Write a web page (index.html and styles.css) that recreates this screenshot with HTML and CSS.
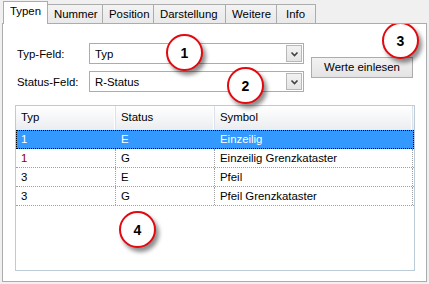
FILE: index.html
```html
<!DOCTYPE html>
<html>
<head>
<meta charset="utf-8">
<link rel="stylesheet" href="styles.css">
</head>
<body>
<div class="window">
  <div class="tabs">
    <div class="tab active">Typen</div>
    <div class="tab">Nummer</div>
    <div class="tab">Position</div>
    <div class="tab">Darstellung</div>
    <div class="tab">Weitere</div>
    <div class="tab">Info</div>
  </div>
  <div class="panel">
    <div class="form">
      <label class="lbl">Typ-Feld:</label>
      <div class="combo"><span class="val">Typ</span><span class="drop"><svg width="9" height="6" viewBox="0 0 9 6"><path d="M1.5 1.5 L4.5 4.5 L7.5 1.5" fill="none" stroke="#404040" stroke-width="1.6"/></svg></span></div>
      <button class="btn">Werte einlesen</button>
      <label class="lbl">Status-Feld:</label>
      <div class="combo"><span class="val">R-Status</span><span class="drop"><svg width="9" height="6" viewBox="0 0 9 6"><path d="M1.5 1.5 L4.5 4.5 L7.5 1.5" fill="none" stroke="#404040" stroke-width="1.6"/></svg></span></div>
    </div>
    <div class="list">
      <div class="row head">
        <div class="c c1">Typ</div>
        <div class="c c2">Status</div>
        <div class="c c3">Symbol</div>
      </div>
      <div class="row sel">
        <div class="c c1">1</div>
        <div class="c c2">E</div>
        <div class="c c3">Einzeilig</div>
      </div>
      <div class="row">
        <div class="c c1 red">1</div>
        <div class="c c2">G</div>
        <div class="c c3">Einzeilig Grenzkataster</div>
      </div>
      <div class="row">
        <div class="c c1">3</div>
        <div class="c c2">E</div>
        <div class="c c3">Pfeil</div>
      </div>
      <div class="row">
        <div class="c c1">3</div>
        <div class="c c2">G</div>
        <div class="c c3">Pfeil Grenzkataster</div>
      </div>
    </div>
    <div class="badge b1">1</div>
    <div class="badge b2">2</div>
    <div class="badge b3">3</div>
    <div class="badge b4">4</div>
  </div>
</div>
</body>
</html>
```

FILE: styles.css
```css
html, body {
  margin: 0;
  padding: 0;
  background: #f0f0f0;
}
body {
  font-family: "Liberation Sans", Arial, sans-serif;
  font-size: 11.4px;
  color: #000;
}
.window {
  width: 429px;
  height: 284px;
  box-sizing: border-box;
  padding: 1px 2px 0 2px;
}
.tabs {
  display: flex;
  align-items: flex-end;
  height: 22px;
  padding-left: 1px;
}
.tab {
  height: 19px;
  box-sizing: border-box;
  border: 1px solid #acacac;
  border-bottom: none;
  border-left: none;
  background: linear-gradient(#f3f3f3, #e9e9e9);
  line-height: 18px;
  padding: 0 6px;
  color: #000;
}
.tab:nth-child(2) { border-left: 1px solid #acacac; width: 55px; }
.tab:nth-child(3) { width: 51px; }
.tab:nth-child(4) { width: 72px; }
.tab:nth-child(5) { width: 51px; }
.tab:nth-child(6) { width: 39px; padding-left: 9px; }
.tab.active {
  height: 23px;
  width: 45px;
  background: #fff;
  border-left: 1px solid #acacac;
  border-right: 1px solid #acacac;
  margin-bottom: -1px;
  z-index: 1;
  position: relative;
  line-height: 19px;
  padding-left: 6px;
}
.tab.active + .tab { border-left: none; }
.panel {
  position: relative;
  overflow: hidden;
  height: 259px;
  box-sizing: border-box;
  border: 1px solid #acacac;
  background: #fff;
  padding: 19px 12px 0 12px;
}
.form {
  display: grid;
  grid-template-columns: 67px 215px 102px;
  grid-template-rows: 21px 21px;
  row-gap: 7px;
  column-gap: 7px;
  align-items: center;
}
.lbl {
  padding-left: 2px;
  white-space: nowrap;
}
.combo {
  height: 21px;
  box-sizing: border-box;
  border: 1px solid #acacac;
  background: #fff;
  display: flex;
  align-items: center;
  justify-content: space-between;
  padding: 1px;
}
.val {
  padding-left: 4px;
}
.drop {
  width: 16px;
  height: 17px;
  box-sizing: border-box;
  border: 1px solid #b8b8b8;
  background: linear-gradient(#f2f2f2, #e4e4e4);
  display: flex;
  align-items: center;
  justify-content: center;
}
.btn {
  grid-column: 3;
  grid-row: 1 / span 2;
  align-self: center;
  height: 21px;
  margin-top: -1px;
  border: 1px solid #acacac;
  background: linear-gradient(#f2f2f2, #e3e3e3);
  font-family: "Liberation Sans", Arial, sans-serif;
  font-size: 11.4px;
  color: #000;
  padding: 0;
}
.list {
  margin-top: 13px;
  width: 400px;
  height: 166px;
  box-sizing: border-box;
  border: 1px solid #bccbda;
  background: #fff;
}
.row {
  display: flex;
  height: 19px;
  box-sizing: border-box;
  border-bottom: 1px dotted #a0a0a0;
  line-height: 18px;
}
.row.head {
  height: 24px;
  border-bottom: none;
  background: linear-gradient(#ffffff, #f3f4f6 60%, #eaecef);
  line-height: 23px;
}
.c {
  box-sizing: border-box;
  padding-left: 5px;
  border-right: 1px dotted #a0a0a0;
}
.c1 { width: 100px; }
.c2 { width: 99px; }
.c3 { width: 198px; border-right: 1px dotted #a0a0a0; }
.row.head .c {
  border-right: 1px solid #dde2e8;
  box-shadow: inset -1px 0 0 #fff;
}
.row.sel {
  background: #3399ff;
  color: #fff;
  outline: 1px dotted #000;
  outline-offset: -1px;
  border-bottom: 1px dotted #000;
}
.row.sel .c { border-right: 1px solid #3399ff; }
.red { color: #8b0000; }
.badge {
  position: absolute;
  width: 37px;
  height: 37px;
  box-sizing: border-box;
  border: 2.5px solid #e4090f;
  border-radius: 50%;
  background: #fff;
  box-shadow: 3px 4px 4px rgba(0, 0, 0, 0.45);
  display: flex;
  align-items: center;
  justify-content: center;
  font-weight: bold;
  font-size: 14px;
  font-family: "Liberation Sans", Arial, sans-serif;
}
.b1 { left: 163px; top: 10px; }
.b2 { left: 224px; top: 43px; }
.b3 { left: 379px; top: -2px; }
.b4 { left: 116px; top: 187px; }
```
